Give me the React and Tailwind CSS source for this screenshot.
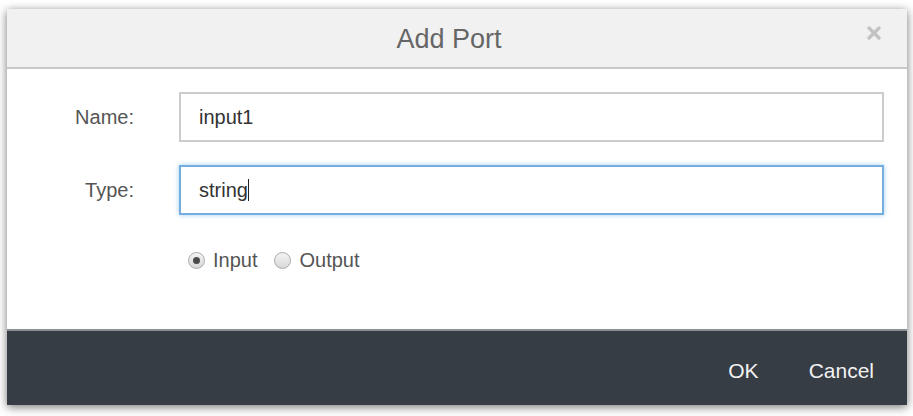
import React from 'react';

// Dialog "Add Port" dengan form nama, tipe dan arah port
function Radio({ checked, label }) {
    return (
        <label className="flex items-center gap-[8px]">
            <span className="w-[17px] h-[17px] rounded-full border border-[#a9a9a9] bg-gradient-to-b from-[#f4f4f4] to-[#d8d8d8] flex items-center justify-center">
                {checked && <span className="w-[7px] h-[7px] rounded-full bg-[#4a4a4a]" />}
            </span>
            <span className="text-[20px] text-[#555]">{label}</span>
        </label>
    );
}

export default function App() {
    return (
        <div className="w-[913px] h-[416px] bg-white pt-[9px] pl-[7px] font-[family-name:'Liberation_Sans',Arial,sans-serif]">
            <div className="w-[900px] h-[396px] flex flex-col bg-white shadow-[0_2px_9px_rgba(0,0,0,0.55)]">
                {/* Header */}
                <div className="relative h-[60px] bg-[#f1f1f1] border-b-2 border-[#c9c9c9] flex items-center justify-center pr-[16px]">
                    <h1 className="text-[27px] text-[#666] leading-none mt-[3px]">Add Port</h1>
                    <svg className="absolute right-[26px] top-[17px]" width="14" height="14" viewBox="0 0 14 14">
                        <path d="M2 2 L12 12 M12 2 L2 12" stroke="#c2c2c2" strokeWidth="3.2" strokeLinecap="round" />
                    </svg>
                </div>

                {/* Body */}
                <div className="flex-1 pt-[23px] pr-[23px] flex flex-col">
                    <div className="flex items-center">
                        <div className="w-[127px] text-right text-[20px] text-[#555]">Name:</div>
                        <div className="ml-[45px] flex-1 h-[50px] border-2 border-[#cccccc] flex items-center pl-[18px] text-[20px] text-[#333]">
                            input1
                        </div>
                    </div>
                    <div className="flex items-center mt-[23px]">
                        <div className="w-[127px] text-right text-[20px] text-[#555]">Type:</div>
                        <div className="ml-[45px] flex-1 h-[50px] border-2 border-[#76ade0] shadow-[0_0_5px_rgba(102,175,233,0.6)] flex items-center pl-[18px] text-[20px] text-[#333]">
                            string<span className="w-px h-[22px] bg-[#222]" />
                        </div>
                    </div>
                    <div className="flex items-center gap-[17px] ml-[181px] mt-[30px]">
                        <Radio checked label="Input" />
                        <Radio label="Output" />
                    </div>
                </div>

                {/* Footer */}
                <div className="h-[76px] bg-[#373d44] border-t-2 border-[#8b8f93] flex items-center justify-end gap-[50px] pr-[33px] pt-[6px] text-[21px] text-[#f2f2f2]">
                    <button>OK</button>
                    <button>Cancel</button>
                </div>
            </div>
        </div>
    );
}
